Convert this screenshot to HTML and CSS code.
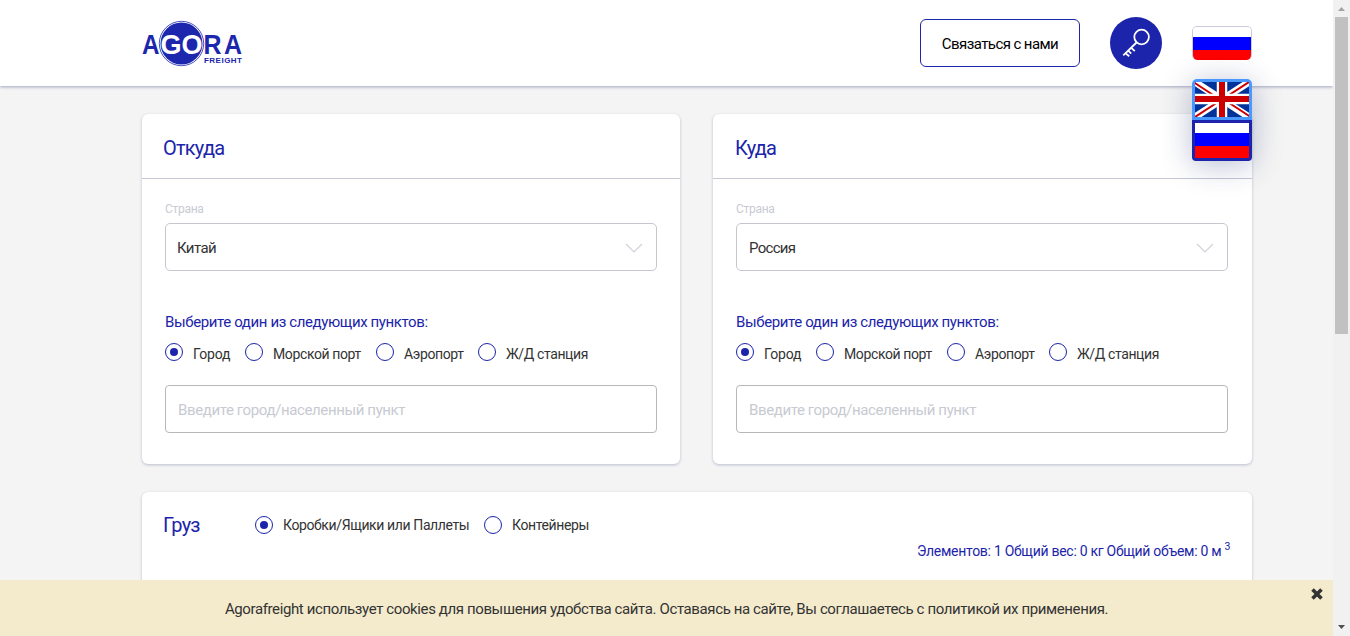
FILE: index.html
```html
<!DOCTYPE html>
<html lang="ru">
<head>
<meta charset="utf-8">
<title>Agora Freight</title>
<link rel="stylesheet" href="styles.css">
</head>
<body>
<div class="window">
  <div class="page">
    <header class="header">
      <div class="container header-row">
        <svg class="logo" width="102" height="48" viewBox="0 0 102 48" role="img" aria-label="Agora Freight">
          <circle cx="39.5" cy="23.5" r="22.2" fill="#fff" stroke="#1c27ad" stroke-width=".8"/>
          <circle cx="39.5" cy="23.5" r="21" fill="#1c27ad"/>
          <g class="logo-name">
            <text x="0" y="34" textLength="17.5" lengthAdjust="spacingAndGlyphs">A</text>
            <text class="logo-light" x="18.5" y="34" textLength="42" lengthAdjust="spacingAndGlyphs">GO</text>
            <text x="61.5" y="34" textLength="18" lengthAdjust="spacingAndGlyphs">R</text>
            <text x="82" y="34" textLength="18" lengthAdjust="spacingAndGlyphs">A</text>
          </g>
          <text class="logo-sub" x="62" y="43" textLength="38">FREIGHT</text>
        </svg>
        <nav class="actions">
          <a class="contact"><span>Связаться с нами</span></a>
          <a class="key">
            <svg width="52" height="52" viewBox="0 0 52 52" fill="none" stroke="#fff" stroke-width="1.8">
              <circle cx="31.6" cy="20" r="7.3"/>
              <path d="M26.5 25.5 13.3 38.3M14.8 35.6l4.4 3.6M17.8 33.2l3.4 3.4M21 30.6l3.8 3.6"/>
            </svg>
          </a>
          <div class="lang">
            <div class="flag flag-current"><i class="white"></i><i class="blue"></i><i class="red"></i></div>
            <div class="lang-menu">
              <div class="lang-item lang-en">
                <svg width="54" height="35" viewBox="0 0 54 35">
                  <path fill="#039" d="M0 0h54v35H0z"/>
                  <path d="M0 0l54 35M54 0L0 35" stroke="#fff" stroke-width="7"/>
                  <path d="M-1 .5L22 15.5M54 0L31 15M0 35l23-15M55 34.5L32 19.5" stroke="#c00" stroke-width="2"/>
                  <path d="M27 0v35M0 17h54" stroke="#fff" stroke-width="10.5"/>
                  <path d="M27 0v35M0 17h54" stroke="#c00" stroke-width="6"/>
                </svg>
              </div>
              <div class="lang-item lang-ru"><div class="flag"><i class="white"></i><i class="blue"></i><i class="red"></i></div></div>
            </div>
          </div>
        </nav>
      </div>
    </header>

    <main class="container main">
      <div class="routes">
        <section class="card route">
          <h2 class="card-head"><span class="t-from">Откуда</span></h2>
          <div class="card-body">
            <div class="label">Страна</div>
            <div class="select"><span class="t-china">Китай</span>
              <svg width="18" height="10" viewBox="0 0 18 10" fill="none" stroke="#d0d2da" stroke-width="1.2"><path d="M1 1l8 8 8-8"/></svg></div>
            <div class="question">Выберите один из следующих пунктов:</div>
            <div class="points">
              <label class="option"><i class="radio on"></i><span class="t-city">Город</span></label>
              <label class="option"><i class="radio"></i><span>Морской порт</span></label>
              <label class="option"><i class="radio"></i><span>Аэропорт</span></label>
              <label class="option"><i class="radio"></i><span>Ж/Д станция</span></label>
            </div>
            <div class="input">Введите город/населенный пункт</div>
          </div>
        </section>
        <section class="card route">
          <h2 class="card-head"><span class="t-to">Куда</span></h2>
          <div class="card-body">
            <div class="label">Страна</div>
            <div class="select"><span class="t-russia">Россия</span>
              <svg width="18" height="10" viewBox="0 0 18 10" fill="none" stroke="#d0d2da" stroke-width="1.2"><path d="M1 1l8 8 8-8"/></svg></div>
            <div class="question">Выберите один из следующих пунктов:</div>
            <div class="points">
              <label class="option"><i class="radio on"></i><span class="t-city">Город</span></label>
              <label class="option"><i class="radio"></i><span>Морской порт</span></label>
              <label class="option"><i class="radio"></i><span>Аэропорт</span></label>
              <label class="option"><i class="radio"></i><span>Ж/Д станция</span></label>
            </div>
            <div class="input">Введите город/населенный пункт</div>
          </div>
        </section>
      </div>
      <section class="card cargo">
        <div class="cargo-head">
          <h2>Груз</h2>
          <label class="option"><i class="radio on"></i><span>Коробки/Ящики или Паллеты</span></label>
          <label class="option"><i class="radio"></i><span>Контейнеры</span></label>
        </div>
        <div class="totals"><span>Элементов: 1 Общий вес: 0 кг Общий объем: 0 м</span><sup>3</sup></div>
      </section>
    </main>

    <aside class="cookies">
      <p>Agorafreight использует cookies для повышения удобства сайта. Оставаясь на сайте, Вы соглашаетесь с политикой их применения.</p>
      <svg class="close" width="12" height="12" viewBox="0 0 12 12" stroke="#333" stroke-width="3.6"><path d="M1.5 1.5l9 9M10.5 1.5l-9 9"/></svg>
    </aside>
  </div>
  <div class="scrollbar">
    <svg width="7" height="4" viewBox="0 0 7 4"><path d="M0 4l3.5-4L7 4z" fill="#a3a3a3"/></svg>
    <div class="thumb"></div>
    <svg class="down" width="7" height="4" viewBox="0 0 7 4"><path d="M0 0l3.5 4L7 0z" fill="#505050"/></svg>
  </div>
</div>
</body>
</html>
```
FILE: styles.css
```css
* { box-sizing: border-box; }
body { margin: 0; overflow: hidden; font: 14px/20px Roboto, "Open Sans", sans-serif; letter-spacing: -.38px; color: #333; }
h2, p { margin: 0; font-weight: 400; }
i { display: block; }
svg { display: block; }
.window { display: grid; grid-template-columns: 1fr 17px; height: 636px; overflow: hidden; }
.page { position: relative; height: 636px; overflow: hidden; background: #f4f4f4; white-space: nowrap; }
.container { width: 1110px; margin-left: 142px; }

.header { position: relative; z-index: 2; height: 86px; background: #fff; box-shadow: 0 1px 3px rgba(28, 39, 100, .38); }
.header-row { display: flex; justify-content: space-between; align-items: center; height: 86px; }
.logo { margin-top: 2px; letter-spacing: 0; }
.logo-name { font: 700 28.5px "Liberation Sans", sans-serif; fill: #1c27ad; }
.logo-name .logo-light { fill: #fff; }
.logo-sub { font: 700 8px "Liberation Sans", sans-serif; fill: #1c27ad; }
.actions { display: flex; align-items: center; gap: 30px; }
.contact { display: flex; align-items: center; justify-content: center; width: 160px; height: 48px; padding-top: 1px; border: 1px solid #1c27ad; border-radius: 6px; color: #000; font-size: 15px; letter-spacing: -.58px; }
.key { width: 52px; height: 52px; border-radius: 50%; background: #1b24aa; }
.lang { position: relative; }
.flag { display: grid; grid-template-rows: 10px 13px 1fr; height: 35px; }
.flag-current { width: 60px; height: 34px; border: 1px solid #cbcbdc; border-bottom: 0; border-radius: 5px; overflow: hidden; }
.white { background: #fff; }
.blue { background: #00f; }
.red { background: #f00; }
.lang-menu { position: absolute; top: 53px; left: 0; width: 60px; border-radius: 5px; box-shadow: 0 4px 30px rgba(28, 39, 110, .3); }
.lang-item { height: 41px; padding: 3px; }
.lang-en { background: #4898ff; border-radius: 5px 5px 0 0; }
.lang-ru { background: #1b24aa; border-radius: 0 0 4px 4px; }

.main { display: grid; gap: 28px; padding-top: 28px; }
.routes { display: grid; grid-template-columns: 538px 539px; justify-content: space-between; }
.card { background: #fff; border-radius: 6px; box-shadow: 0 1px 3px rgba(28, 39, 100, .27); }
.route { height: 350px; }
.card-head { height: 65px; padding: 22px 21px 0; border-bottom: 1px solid #c5c7d3; font-size: 20px; line-height: 24px; letter-spacing: -.8px; color: #1b24aa; }
.t-to { margin-left: 1px; }
.card-body { padding: 22px 23px 0; }
.label { height: 22px; font-size: 12px; line-height: 17px; letter-spacing: -.3px; color: #c8cad2; }
.select { display: flex; align-items: center; justify-content: space-between; width: 492px; height: 48px; padding: 1px 13px 0 11px; border: 1px solid #c5c7d0; border-radius: 5px; font-size: 15px; letter-spacing: -.6px; }
.t-russia { margin-left: 1px; letter-spacing: -.7px; }
.question { margin-top: 41px; font-size: 15px; color: #1b24aa; }
.points { display: grid; grid-template-columns: 80px 131px 102px auto; margin-top: 11px; }
.option { display: flex; gap: 10px; height: 18px; }
.option span { line-height: 22px; }
.option .t-city { letter-spacing: -.2px; }
.radio { display: grid; place-items: center; flex: none; width: 18px; height: 18px; border: 1px solid #1b24aa; border-radius: 50%; }
.on::after { content: ""; width: 8px; height: 8px; border-radius: 50%; background: #1b24aa; }
.input { width: 492px; height: 48px; margin-top: 24px; padding: 0 12px; border: 1px solid #b8b8b8; border-radius: 4px; font-size: 15px; line-height: 48px; color: #c8cad2; }
.cargo { height: 200px; }
.cargo-head { display: grid; grid-template-columns: 92px 229px auto; align-items: center; height: 66px; padding-left: 21px; }
.cargo-head h2 { font-size: 20px; letter-spacing: -.8px; color: #1b24aa; }
.cargo-head .option span { line-height: 18px; }
.totals { display: flex; justify-content: flex-end; gap: 3px; margin-top: -17px; padding-right: 22px; letter-spacing: -.28px; color: #1b24aa; }
.totals sup { font-size: 10.5px; line-height: 11px; }

.cookies { position: absolute; z-index: 3; left: 0; right: 0; bottom: 0; display: flex; height: 56px; justify-content: center; background: #f4ebcd; font-size: 15px; line-height: 58px; letter-spacing: -.385px; }
.close { position: absolute; right: 10px; top: 8px; }
.scrollbar { display: flex; flex-direction: column; align-items: center; height: 636px; padding: 7px 0; background: #f1f1f1; }
.thumb { width: 13px; height: 317px; margin-top: 6px; background: #c1c1c1; }
.down { margin-top: auto; }
```
